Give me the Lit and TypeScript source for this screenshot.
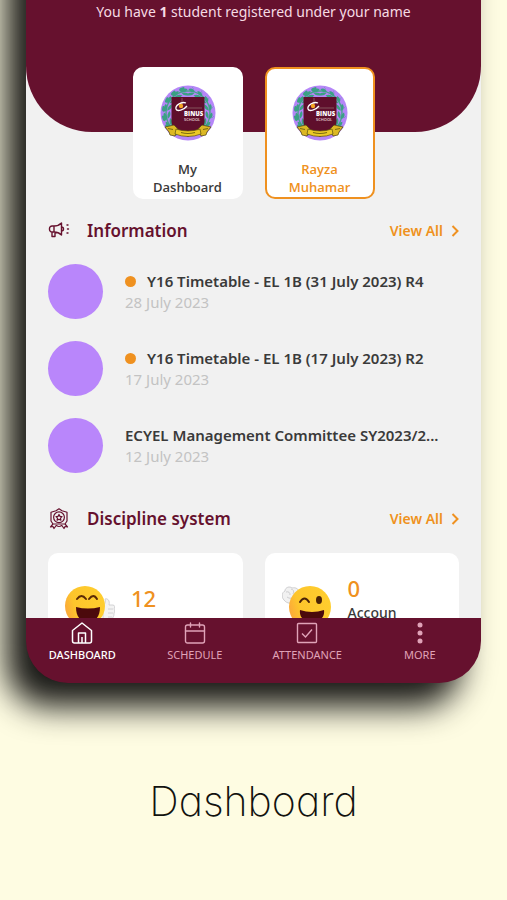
import { LitElement, html, css, svg, nothing } from "lit";
import { customElement } from "lit/decorators.js";
import { classMap } from "lit/directives/class-map.js";

const leaves = [-150, -128, -106, -84, -62, -40, -18, 18, 40, 62, 84, 106, 128, 150];

const crest = html`
  <svg class="crest" viewBox="0 0 56 56" aria-hidden="true">
    <circle cx="28" cy="28" r="27.5" fill="#b586f8" />
    <circle cx="28" cy="28" r="22" fill="none" stroke="#47a58c" stroke-width="1.4" stroke-dasharray="66 6" transform="rotate(-84 28 28)" />
    ${leaves.map(
      (a) => svg`<g transform="rotate(${a} 28 28)" fill="#3aa184">
        <path d="M28 6 q-4 -5 ${a < 0 ? 4 : -4} -4 q2 2 ${a < 0 ? -4 : 4} 4z" />
        <path d="M28 6 q${a < 0 ? 3 : -3} -4 ${a < 0 ? 7 : -7} -1 q${a < 0 ? -3 : 3} 3 ${a < 0 ? -7 : 7} 1z" />
        <path d="M28 7 q${a < 0 ? 2 : -2} 5 ${a < 0 ? 7 : -7} 4 q${a < 0 ? -2 : 2} -4 ${a < 0 ? -7 : 7} -4z" />
      </g>`
    )}
    <path d="M11.500 12h33v25c0 7-10 9-16.500 15c-6.500-6-16.500-8-16.500-15z" fill="#5f0f2c" />
    <path d="M22 13v6M26 23h16" stroke="#a98" stroke-width=".5" />
    <path d="M26 18c-5-2-11 3-10 6 1 3 8 1 11-3" fill="none" stroke="#fff" stroke-width="1.300" />
    <circle cx="21" cy="21" r="2.200" fill="#f5a623" />
    <text x="24" y="31" class="crest-name">BINUS</text>
    <text x="24" y="36" class="crest-kind">SCHOOL</text>
    <path d="M5 42l9-2 4 4-3 7-5-1-1-3zM51 42l-9-2-4 4 3 7 5-1 1-3z" fill="#dcb824" stroke="#4e4410" stroke-width=".7" />
    <path d="M16 44q12 4 24 0l1 5q-13 5-26 0z" fill="#ecca27" stroke="#5c5012" stroke-width=".7" />
    <path d="M21 47.500q7 2 14 0M8 43.500l5 1M43 44.500l5-1" stroke="#7a6a14" stroke-width="1.200" fill="none" />
  </svg>`;

const megaphone = html`
  <svg class="heading-icon" viewBox="0 0 22 22" fill="none" stroke="currentColor" stroke-width="1.400" stroke-linejoin="round" stroke-linecap="round" aria-hidden="true">
    <path d="M6 6H4A2.500 2.500 0 0 0 1.500 8.500v1A2.500 2.500 0 0 0 4 12h2zM6 6C9 6 11.500 5 13.500 3v12C11.500 13 9 12 6 12M13.500 7a2 2 0 0 1 0 4M4 12v4.500h3V12" />
    <path d="M19 5h1M19.500 9h1M19 13h1" />
  </svg>`;

const rosette = html`
  <svg class="heading-icon" viewBox="0 0 22 22" fill="none" stroke="currentColor" stroke-width="1.200" stroke-linejoin="round" aria-hidden="true">
    <path d="M11 .8l3 2 5 1.500V13l-2 3H5l-2-3V4.300l5-1.500z" />
    <circle cx="11" cy="9.300" r="5.400" />
    <path d="M11 6.500l1 1.900 2 .3-1.500 1.500.4 2-1.900-1-1.900 1 .4-2L8 8.700l2-.3z" />
    <path d="M5 16l-2.500 3 2.500-.5 1 2 2.500-3.500M17 16l2.500 3-2.500-.5-1 2-2.500-3.500M8.500 17.500q2.500 2 5 0" />
  </svg>`;

const face = svg`
  <defs>
    <linearGradient id="skin" x1="0" y1=".6" x2="1" y2=".3">
      <stop offset="0" stop-color="#fba83a" /><stop offset=".25" stop-color="#fdc52c" /><stop offset="1" stop-color="#ffce2e" />
    </linearGradient>
  </defs>`;

const grin = html`
  <svg class="emoji" viewBox="0 0 50 44" aria-hidden="true">
    ${face}
    <path d="M38 35v-14c2-2 3-4 2-7 3-1 5 2 4 6h4c2 0 2 3 1 4 1 1 1 3 0 4 0 2 0 3-1 4 0 2-1 3-3 3h-4z" fill="#f3f3f3" stroke="#c9c9cc" stroke-width=".8" />
    <path d="M43 24h5M43 28h5M43 32h4" stroke="#c9c9cc" stroke-width=".8" />
    <circle cx="20" cy="21" r="20" fill="url(#skin)" />
    <path d="M12 14q4.500-6 9 0M24 14q4.500-6 8 0" fill="none" stroke="#5b2a06" stroke-width="2" stroke-linecap="round" />
    <path d="M11 22q12 3 24 0c0 10-5 15-12 15s-12-5-12-15z" fill="#4c0a0c" />
  </svg>`;

const wink = html`
  <svg class="emoji" viewBox="0 0 50 44" aria-hidden="true">
    ${face}
    <path d="M2 15C-1 12 0 7 3 6 3 2 8 1 10 3c4-1 7 1 7 5 2 5-1 8-5 8-2 3-7 3-10-1z" fill="#f1f1f1" stroke="#c4c4c6" stroke-width=".8" />
    <path d="M4 7q4-1 4 3M9 4q4 1 2 5M5 12q4 3 7-1" fill="none" stroke="#c4c4c6" stroke-width=".8" />
    <circle cx="28" cy="22" r="21" fill="url(#skin)" />
    <path d="M18 17q4.500-7 9 0" fill="none" stroke="#4a2207" stroke-width="2" stroke-linecap="round" />
    <ellipse cx="37" cy="15" rx="3" ry="4" fill="#4a2207" />
    <path d="M18 25q12 4 24 0c1 7-4 12-12 12s-13-5-12-12z" fill="#4c0a0c" />
  </svg>`;

const home = html`
  <svg class="tab-icon" viewBox="0 0 22 22" fill="none" stroke="currentColor" stroke-width="1.500" stroke-linejoin="round" aria-hidden="true">
    <path d="M1.500 8.500L11 1l9.500 7.500V19a2 2 0 0 1-2 2h-15a2 2 0 0 1-2-2zM7.500 21V11h7v10M11 21v-6" />
  </svg>`;
const calendar = html`
  <svg class="tab-icon" viewBox="0 0 22 22" fill="none" stroke="currentColor" stroke-width="1.400" stroke-linecap="round" aria-hidden="true">
    <rect x="1.500" y="3" width="19" height="18" rx="2" />
    <path d="M1.500 9h19M6.500 1v4M15.500 1v4" />
  </svg>`;
const check = html`
  <svg class="tab-icon" viewBox="0 0 22 22" fill="none" stroke="currentColor" stroke-width="1.400" aria-hidden="true">
    <rect x="1.500" y="1.500" width="19" height="19" rx="1" />
    <path d="M6 11.500l3.500 3.500L16 7.500" />
  </svg>`;
const dots = html`
  <svg class="tab-icon" viewBox="0 0 22 22" fill="currentColor" aria-hidden="true">
    <circle cx="11" cy="3" r="2.500" /><circle cx="11" cy="11" r="2.500" /><circle cx="11" cy="19" r="2.500" />
  </svg>`;

const profiles = [
  { first: "My", second: "Dashboard", active: false },
  { first: "Rayza", second: "Muhamar", active: true },
];
const posts = [
  { title: "Y16 Timetable - EL 1B (31 July 2023) R4", date: "28 July 2023", unread: true },
  { title: "Y16 Timetable - EL 1B (17 July 2023) R2", date: "17 July 2023", unread: true },
  { title: "ECYEL Management Committee SY2023/2...", date: "12 July 2023", unread: false },
];
const scores = [
  { icon: grin, value: 12, label: "", tall: false },
  { icon: wink, value: 0, label: "Accoun", tall: true },
];
const tabs = [
  { icon: home, label: "DASHBOARD", active: true },
  { icon: calendar, label: "SCHEDULE", active: false },
  { icon: check, label: "ATTENDANCE", active: false },
  { icon: dots, label: "MORE", active: false },
];

@customElement("app-root")
export class AppRoot extends LitElement {
  static styles = css`
    :host {
      --maroon: #66112e;
      --orange: #ef9120;
      display: flex;
      flex-direction: column;
      height: 100vh;
      overflow: hidden;
      background: #fefce2;
      color: #3a3a3a;
      font-family: "Noto Sans", "Open Sans", sans-serif;
    }
    * { box-sizing: border-box; }
    h1, h2, h3, p, ul { margin: 0; padding: 0; }
    ul { list-style: none; }
    a { color: inherit; text-decoration: none; }
    button { font: inherit; border: 0; cursor: pointer; }

    .phone {
      flex: 1;
      min-height: 0;
      margin: -90px 26px 0;
      display: flex;
      flex-direction: column;
      border-radius: 0 0 42px 42px;
      background: var(--maroon);
      box-shadow: -20px 24px 32px #000000e6;
    }
    .screen {
      flex: 1;
      min-height: 0;
      overflow: hidden;
      background: #f1f1f1;
    }
    .header {
      padding: 92px 22px 110px;
      background: var(--maroon);
      border-radius: 0 0 66px 66px;
      color: #f6dbe4;
      font-size: 14px;
      line-height: 20px;
      text-align: center;
    }
    .profiles {
      display: flex;
      justify-content: center;
      gap: 22px;
      margin-top: -65px;
    }
    .profile {
      width: 110px;
      padding: 16px 8px 0;
      height: 132px;
      display: flex;
      flex-direction: column;
      align-items: center;
      gap: 19px;
      border: 2px solid #fff;
      border-radius: 10px;
      background: #fff;
      color: #3a3a3a;
      font-family: "Open Sans", sans-serif;
      font-size: 13px;
      font-weight: 600;
      line-height: 18px;
    }
    .profile.active { border-color: var(--orange); color: var(--orange); }
    .profile-name span { display: block; }
    .crest { width: 56px; height: 56px; }
    .crest-name { font: 800 6px "Open Sans", sans-serif; fill: #fff; }
    .crest-kind { font: 600 4px "Open Sans", sans-serif; fill: #e8cfd8; }

    .section { padding: 20px 22px 0; }
    .section + .section { padding-top: 34px; }
    .section-head {
      display: flex;
      align-items: center;
      height: 24px;
      color: var(--maroon);
    }
    .heading-icon { width: 22px; height: 22px; margin-right: 17px; }
    h2 { flex: 1; font-size: 17px; font-weight: 600; line-height: 24px; }
    .more {
      display: flex;
      align-items: center;
      gap: 8px;
      color: var(--orange);
      font-size: 14px;
      font-weight: 600;
      line-height: 22px;
    }
    .chevron { width: 8px; height: 12px; }

    .posts { display: flex; flex-direction: column; gap: 22px; padding-top: 21px; }
    .post { display: flex; align-items: center; gap: 22px; color: #3a3a3a; }
    .avatar { flex: none; width: 55px; height: 55px; border-radius: 50%; background: #b986fb; }
    .post-text { min-width: 0; font-size: 15px; line-height: 21px; }
    .post h3 { display: flex; align-items: center; gap: 11px; font-size: 15px; font-weight: 600; white-space: nowrap; }
    .dot { width: 11px; height: 11px; border-radius: 50%; background: var(--orange); }
    .post p { color: #c3c3c3; }

    .scores { display: grid; grid-template-columns: 1fr 1fr; gap: 22px; padding-top: 22px; }
    .score {
      display: flex;
      align-items: center;
      gap: 16px;
      height: 108px;
      padding: 0 17px;
      border-radius: 10px;
      background: #fff;
    }
    .emoji { flex: none; width: 50px; height: 44px; }
    .value { color: var(--orange); font-size: 22px; font-weight: 500; line-height: 28px; }
    .label { min-height: 18px; font-size: 14px; font-weight: 500; line-height: 22px; }
    .label.tall { min-height: 38px; }

    .tabs {
      display: grid;
      grid-template-columns: repeat(4, 1fr);
      height: 65px;
      padding: 4px 5px 0 0;
      border-radius: 0 0 42px 42px;
      color: #e0a3b8;
      font-size: 11px;
      line-height: 16px;
    }
    .tab { display: flex; flex-direction: column; align-items: center; gap: 3px; }
    .tab.active { color: #fff; font-weight: 500; }
    .tab-icon { width: 22px; height: 22px; }

    .caption {
      padding: 94px 0 75px;
      color: #12120f;
      font-family: Inter, sans-serif;
      font-feature-settings: "cv11";
      font-size: 41px;
      font-weight: 200;
      line-height: 48px;
      text-align: center;
    }
  `;

  private sectionHead(icon: unknown, title: string) {
    return html`<div class="section-head">
      ${icon}
      <h2>${title}</h2>
      <a class="more" href="#">View All
        <svg class="chevron" viewBox="0 0 8 12" fill="none" stroke="currentColor" stroke-width="2" aria-hidden="true"><path d="M1.500 1l5 5-5 5" /></svg>
      </a>
    </div>`;
  }

  render() {
    return html`
      <div class="phone">
        <main class="screen">
          <header class="header">You have <b>1</b> student registered under your name</header>
          <div class="profiles">
            ${profiles.map(
              (p) => html`<button class=${classMap({ profile: true, active: p.active })}>
                ${crest}
                <span class="profile-name"><span>${p.first}</span><span>${p.second}</span></span>
              </button>`
            )}
          </div>
          <section class="section">
            ${this.sectionHead(megaphone, "Information")}
            <ul class="posts">
              ${posts.map(
                (p) => html`<li>
                  <a class="post" href="#">
                    <span class="avatar"></span>
                    <div class="post-text">
                      <h3>${p.unread ? html`<span class="dot"></span>` : nothing}${p.title}</h3>
                      <p>${p.date}</p>
                    </div>
                  </a>
                </li>`
              )}
            </ul>
          </section>
          <section class="section">
            ${this.sectionHead(rosette, "Discipline system")}
            <div class="scores">
              ${scores.map(
                (s) => html`<article class="score">
                  ${s.icon}
                  <div>
                    <p class="value">${s.value}</p>
                    <p class=${classMap({ label: true, tall: s.tall })}>${s.label}</p>
                  </div>
                </article>`
              )}
            </div>
          </section>
        </main>
        <nav class="tabs">
          ${tabs.map(
            (t) => html`<a class=${classMap({ tab: true, active: t.active })} href="#">${t.icon}<span>${t.label}</span></a>`
          )}
        </nav>
      </div>
      <h1 class="caption">Dashboard</h1>
    `;
  }
}
